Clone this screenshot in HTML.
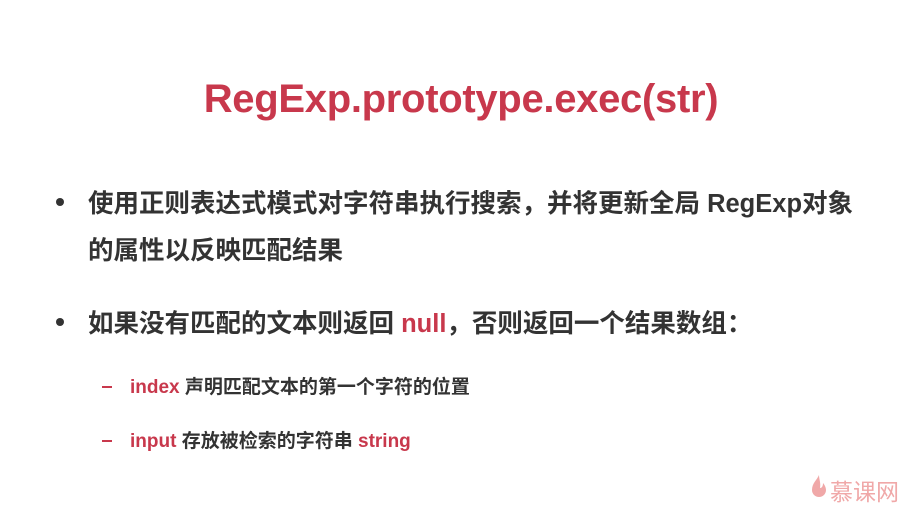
<!DOCTYPE html>
<html><head><meta charset="utf-8"><style>
body{margin:0;width:911px;height:505px;background:#fff;overflow:hidden;position:relative;font-family:"Liberation Sans","Noto Sans CJK SC",sans-serif;font-weight:bold;color:#333}
.a{position:absolute;white-space:nowrap}
.r{color:#c8384c}
.b{width:8px;height:8px;border-radius:50%;background:#333;position:absolute}
.d{position:absolute;width:10px;height:2px;background:#c8384c}
</style></head><body>
<div class="a r" style="left:200px;top:77px;font-size:40px;width:522px;text-align:center;letter-spacing:-0.3px">RegExp.prototype.exec(str)</div>
<div class="b" style="left:56px;top:198px"></div>
<div class="a" style="left:88px;top:183px;font-size:25.5px;letter-spacing:0">使用正则表达式模式对字符串执行搜索，并将更新全局 RegExp对象</div>
<div class="a" style="left:88px;top:230px;font-size:25.5px">的属性以反映匹配结果</div>
<div class="b" style="left:56px;top:318px"></div>
<div class="a" style="left:88px;top:303px;font-size:25.5px">如果没有匹配的文本则返回 <span class="r">null</span>，否则返回一个结果数组：</div>
<div class="d" style="left:102px;top:386px"></div>
<div class="a" style="left:130px;top:372px;font-size:19px"><span class="r">index</span> 声明匹配文本的第一个字符的位置</div>
<div class="d" style="left:102px;top:440px"></div>
<div class="a" style="left:130px;top:426px;font-size:19px"><span class="r">input</span> 存放被检索的字符串 <span class="r">string</span></div>
<svg class="a" style="left:811px;top:474px" width="16" height="26" viewBox="0 0 16 26"><path d="M8 1C6 6 1 9 1 16a7 7 0 0 0 14 0c0-3-2-6-3-7 0 3-1 5-3 5 1-5-1-9-1-13z" fill="#f0a8a8"/></svg>
<div class="a" style="left:830px;top:473px;font-size:23px;font-weight:normal;color:#f0a8a8">慕课网</div>
</body></html>
